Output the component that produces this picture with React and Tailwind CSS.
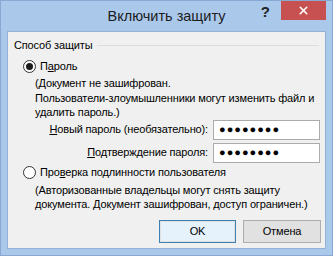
import { X } from "lucide-react"

function Radio({ checked }) {
  return (
    <span className="flex h-[13px] w-[13px] shrink-0 items-center justify-center rounded-full border border-[#333] bg-white">
      {checked && <span className="h-[7px] w-[7px] rounded-full bg-[#1a1a1a]" />}
    </span>
  )
}

function PasswordField({ hotkey, rest }) {
  return (
    <div className="flex items-center justify-end gap-[5px]">
      <span>
        <span className="underline">{hotkey}</span>
        {rest}
      </span>
      <div className="flex h-[20px] w-[107px] items-center border border-[#ababab] bg-white pl-[5px] text-[11px] tracking-[1px]">
        ●●●●●●●●
      </div>
    </div>
  )
}

export default function App() {
  return (
    <div
      className="flex h-[256px] w-[333px] flex-col overflow-hidden whitespace-nowrap border border-[#87a9d2] bg-[#aac8ea] text-[11px] tracking-[-0.15px] text-black"
      style={{ fontFamily: '"Liberation Sans", Arial, sans-serif' }}
    >
      {/* title bar */}
      <div className="relative flex h-[30px] shrink-0 items-start justify-center tracking-normal">
        <div className="pt-[5px] text-[14.5px] text-[#1b1b1b]">Включить защиту</div>
        <div className="absolute right-[6px] top-[-1px] flex items-start">
          <span className="mr-[11px] mt-[1px] text-[15px] font-bold text-[#222]">?</span>
          <span className="flex h-[20px] w-[45px] items-center justify-center bg-[#c75050]">
            <X size={13} strokeWidth={3} color="#fff" />
          </span>
        </div>
      </div>

      {/* client area */}
      <div className="mx-[6px] mb-[6px] flex flex-1 flex-col border border-[#95b2d6] bg-[#f0f0f0] px-[6px]">
        <div className="mt-[6px] flex items-center gap-[5px] leading-[15px]">
          <span>Способ защиты</span>
          <span className="h-px flex-1 bg-[#dcdcdc]" />
        </div>

        <div className="ml-[9px] mt-[6px] flex items-center gap-[4px] leading-[15px]">
          <Radio checked />
          <span>
            П<span className="underline">а</span>роль
          </span>
        </div>
        <p className="ml-[21px] mt-[2px] leading-[14.5px]">
          (Документ не зашифрован.
          <br />
          Пользователи-злоумышленники могут изменить файл и
          <br />
          удалить пароль.)
        </p>

        <div className="-mr-[1px] flex flex-col gap-[3px]">
          <PasswordField hotkey="Н" rest="овый пароль (необязательно):" />
          <PasswordField hotkey="П" rest="одтверждение пароля:" />
        </div>

        <div className="ml-[9px] mt-[2px] flex items-center gap-[4px] leading-[15px]">
          <Radio />
          <span>
            Про<span className="underline">в</span>ерка подлинности пользователя
          </span>
        </div>
        <p className="ml-[21px] mt-[3px] leading-[14px]">
          (Авторизованные владельцы могут снять защиту
          <br />
          документа. Документ зашифрован, доступ ограничен.)
        </p>

        <div className="-mr-[2px] mt-[9px] flex justify-end gap-[7px]">
          <button className="h-[23px] w-[77px] border border-[#3c7fb1] bg-[#e5f1fb] shadow-[inset_0_0_0_1px_#e1e1e1]">
            OK
          </button>
          <button className="h-[23px] w-[78px] border border-[#adadad] bg-[#e1e1e1]">Отмена</button>
        </div>
      </div>
    </div>
  )
}
